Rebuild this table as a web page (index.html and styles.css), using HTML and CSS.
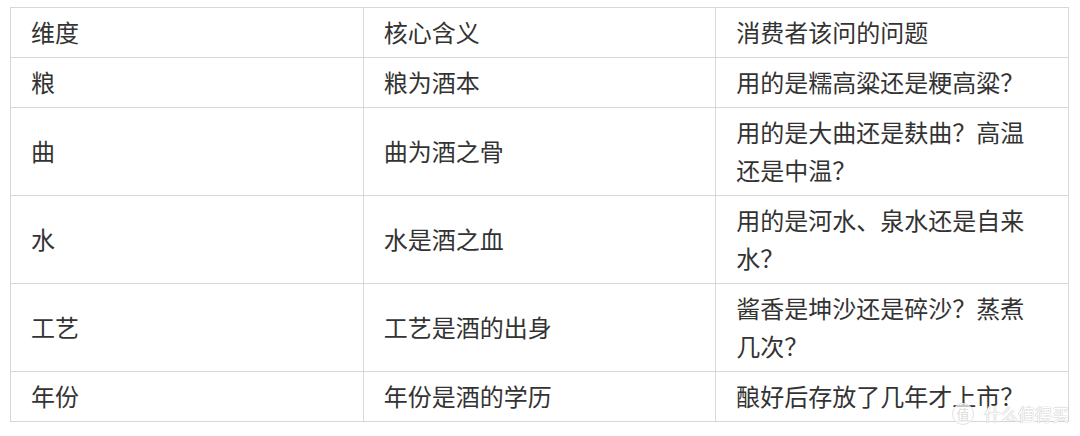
FILE: index.html
```html
<!DOCTYPE html>
<html lang="zh-CN">
<head>
<meta charset="utf-8">
<link rel="stylesheet" href="styles.css">
</head>
<body>
<table class="grid">
  <tr><td>维度</td><td>核心含义</td><td>消费者该问的问题</td></tr>
  <tr><td>粮</td><td>粮为酒本</td><td>用的是糯高粱还是粳高粱？</td></tr>
  <tr><td>曲</td><td>曲为酒之骨</td><td>用的是大曲还是麸曲？高温还是中温？</td></tr>
  <tr><td>水</td><td>水是酒之血</td><td>用的是河水、泉水还是自来水？</td></tr>
  <tr><td>工艺</td><td>工艺是酒的出身</td><td>酱香是坤沙还是碎沙？蒸煮几次？</td></tr>
  <tr><td>年份</td><td>年份是酒的学历</td><td>酿好后存放了几年才上市？</td></tr>
</table>
<div class="mark"><span class="mark-logo">值</span><span class="mark-text">什么值得买</span></div>
</body>
</html>
```
FILE: styles.css
```css
html, body {
  margin: 0;
  padding: 0;
  background: #ffffff;
}
body {
  font-family: "Noto Sans CJK SC", "Noto Sans", sans-serif;
  color: #333333;
  position: relative;
  width: 1080px;
  height: 436px;
  overflow: hidden;
}
.grid {
  border-collapse: collapse;
  margin: 7px 0 0 10px;
  width: 1059px;
  table-layout: fixed;
}
.grid td {
  border: 1px solid #d6d6de;
  font-size: 24px;
  line-height: 38px;
  padding: 5px 20px 6px 20px;
  vertical-align: middle;
  width: 33.33%;
  word-break: break-all;
}
.mark {
  position: absolute;
  left: 952px;
  top: 403px;
  display: flex;
  align-items: center;
  gap: 10px;
}
.mark-logo {
  width: 20px;
  height: 20px;
  border-radius: 50%;
  border: 1px solid #e2e2e2;
  background: rgba(255,255,255,0.7);
  color: #dcdcdc;
  font-size: 13px;
  line-height: 20px;
  text-align: center;
}
.mark-text {
  font-size: 17px;
  line-height: 20px;
  color: #ffffff;
  letter-spacing: 0;
  text-shadow: 0 0 1px #b8b8b8, 0 0 1px #b8b8b8;
}
```
